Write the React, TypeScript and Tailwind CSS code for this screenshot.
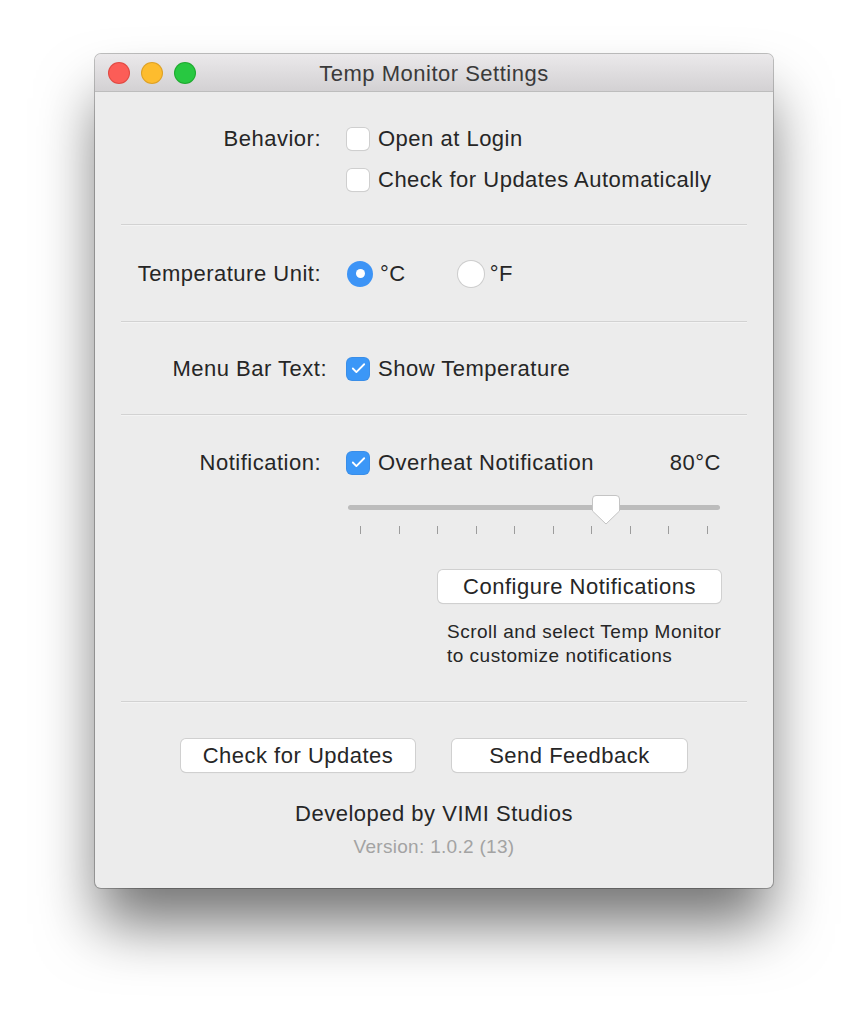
import { Check } from 'lucide-react'

const font = { fontFamily: '"Liberation Sans", Arial, sans-serif' }

function Checkbox({ checked }: { checked?: boolean }) {
  return checked ? (
    <span className="flex h-[22px] w-[22px] shrink-0 items-center justify-center rounded-[5px] bg-[#3b97f7] shadow-[0_0_0_1px_#3a8ee8]">
      <Check size={17} strokeWidth={2.6} className="text-white" />
    </span>
  ) : (
    <span className="h-[22px] w-[22px] shrink-0 rounded-[5px] bg-white shadow-[0_0_0_1px_#cfcfcf,0_1px_1px_rgba(0,0,0,0.08)]" />
  )
}

function Radio({ on, className }: { on?: boolean; className?: string }) {
  return on ? (
    <span className={`flex h-[26px] w-[26px] shrink-0 items-center justify-center rounded-full bg-[#3d94f6] ${className ?? ''}`}>
      <span className="h-[9px] w-[9px] rounded-full bg-white" />
    </span>
  ) : (
    <span className={`block h-[26px] w-[26px] shrink-0 rounded-full bg-white shadow-[0_0_0_1px_#cdcdcd] ${className ?? ''}`} />
  )
}

function Divider() {
  return <div className="mx-[26px] h-[2px] border-t border-[#d2d2d2] bg-[#f3f3f3]" />
}

function Row({
  label,
  children,
  className,
  labelClass,
}: {
  label: string
  children: React.ReactNode
  className?: string
  labelClass?: string
}) {
  return (
    <div className={`flex h-[41px] items-center ${className ?? ''}`}>
      <div className={`w-[226px] shrink-0 text-right ${labelClass ?? ''}`}>{label}</div>
      <div className="ml-[26px] flex flex-1 items-center">{children}</div>
    </div>
  )
}

function MacButton({ children, className }: { children: React.ReactNode; className?: string }) {
  return (
    <button
      className={`flex h-[33px] items-center justify-center rounded-[5px] bg-white text-[#262626] shadow-[0_0_0_1px_#d0d0d0,0_1px_1px_rgba(0,0,0,0.12)] ${className ?? ''}`}
    >
      {children}
    </button>
  )
}

export default function App() {
  const ticks = Array.from({ length: 10 })

  return (
    <div className="min-h-[1024px] bg-white pt-[54px]" style={font}>
      <div className="mx-auto w-[678px] overflow-hidden rounded-[6px] bg-[#ececec] text-[22px] tracking-[0.5px] text-[#262626] shadow-[0_0_0_1px_rgba(0,0,0,0.25),0_40px_60px_-4px_rgba(0,0,0,0.55)]">
        {/* title bar */}
        <div className="relative flex h-[38px] items-center justify-center border-b border-[#bdbdbd] bg-gradient-to-b from-[#ebe9eb] to-[#d3d1d3]">
          <div className="absolute left-[14px] top-[9px] flex gap-[13px]">
            <span className="h-[20px] w-[20px] rounded-full bg-[#fc5d57] shadow-[0_0_0_1px_#e14942]" />
            <span className="h-[20px] w-[20px] rounded-full bg-[#fdbc2e] shadow-[0_0_0_1px_#dea124]" />
            <span className="h-[20px] w-[20px] rounded-full bg-[#28c841] shadow-[0_0_0_1px_#1eaa2f]" />
          </div>
          <span className="pt-[2px] text-[#3a3a3a]">Temp Monitor Settings</span>
        </div>

        <div className="pt-[26px]">
          <Row label="Behavior:">
            <Checkbox />
            <span className="ml-[9px]">Open at Login</span>
          </Row>
          <Row label="">
            <Checkbox />
            <span className="ml-[9px]">Check for Updates Automatically</span>
          </Row>

          <div className="mt-[24px]">
            <Divider />
          </div>

          <Row label="Temperature Unit:" className="mt-[27px]">
            <Radio on />
            <span className="ml-[7px]">°C</span>
            <Radio className="ml-[52px]" />
            <span className="ml-[6px]">°F</span>
          </Row>

          <div className="mt-[27px]">
            <Divider />
          </div>

          <Row label="Menu Bar Text:" className="mt-[25px]" labelClass="translate-x-[6px]">
            <Checkbox checked />
            <span className="ml-[9px]">Show Temperature</span>
          </Row>

          <div className="mt-[25px]">
            <Divider />
          </div>

          <Row label="Notification:" className="mt-[26px]">
            <div className="flex w-[374px] items-center">
              <Checkbox checked />
              <span className="ml-[9px]">Overheat Notification</span>
              <span className="ml-auto">80°C</span>
            </div>
          </Row>

          {/* slider */}
          <div className="ml-[253px] mt-[13px] w-[372px]">
            <div className="relative h-[30px]">
              <div className="absolute left-0 right-0 top-[9px] h-[5px] rounded-full bg-[#bcbcbc]" />
              <svg className="absolute left-[243px] top-[-2px]" width="30" height="32" viewBox="0 0 30 32">
                <path
                  d="M5 1.5 H25 Q28.5 1.5 28.5 5 V17 L15 30 L1.5 17 V5 Q1.5 1.5 5 1.5 Z"
                  fill="#ffffff"
                  stroke="#c4c4c4"
                  strokeWidth="1"
                />
              </svg>
            </div>
            <div className="flex justify-between px-[12px]">
              {ticks.map((_, i) => (
                <span key={i} className="h-[8px] w-px bg-[#9c9c9c]" />
              ))}
            </div>
          </div>

          <div className="ml-[343px] mt-[36px] w-[283px]">
            <MacButton className="w-full">Configure Notifications</MacButton>
          </div>

          <div className="ml-[352px] mt-[17px] text-[19px] leading-[24px] tracking-[0.5px]">
            <div>Scroll and select Temp Monitor</div>
            <div>to customize notifications</div>
          </div>

          <div className="mt-[33px]">
            <Divider />
          </div>

          <div className="mt-[36px] flex justify-center gap-[37px]">
            <MacButton className="w-[234px]">Check for Updates</MacButton>
            <MacButton className="w-[235px]">Send Feedback</MacButton>
          </div>

          <div className="mt-[28px] text-center leading-[28px]">Developed by VIMI Studios</div>
          <div className="mt-[7px] pb-[29px] text-center text-[19px] leading-[24px] tracking-[0.3px] text-[#a3a3a3]">
            Version: 1.0.2 (13)
          </div>
        </div>
      </div>
    </div>
  )
}
